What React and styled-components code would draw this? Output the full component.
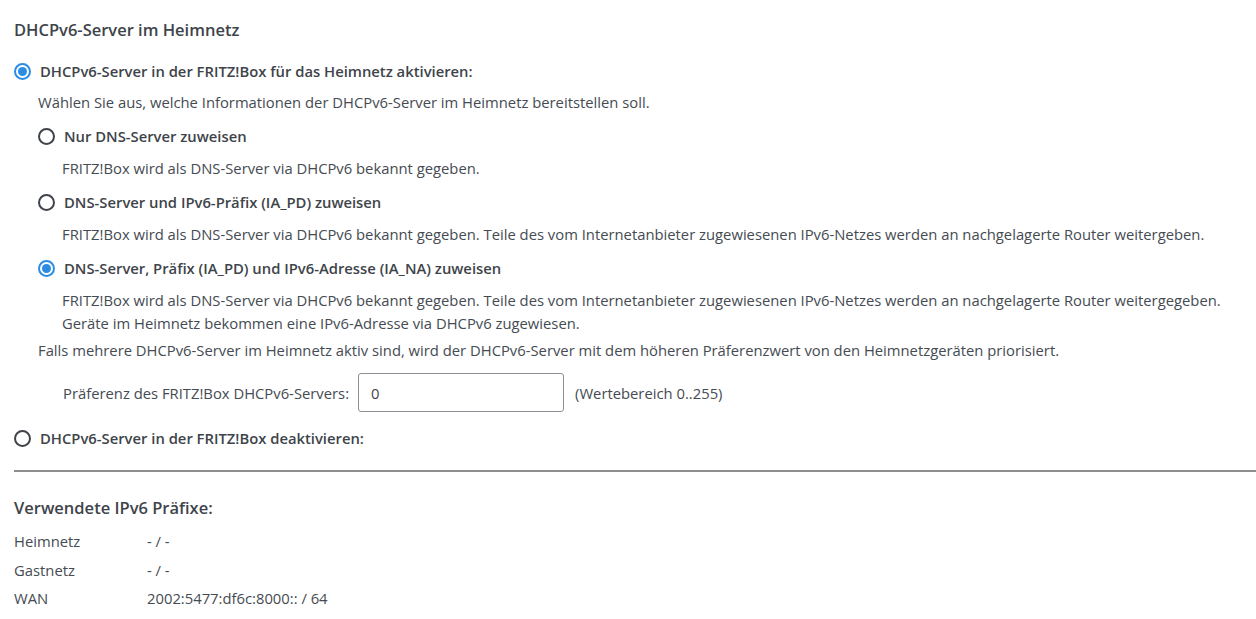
import React from "react";
import styled, { createGlobalStyle } from "styled-components";

const Global = createGlobalStyle`
  html, body { margin: 0; padding: 0; background: #fff; }
  body {
    font-family: "Open Sans", "Noto Sans", sans-serif;
    font-size: 14.8px;
    color: #454b52;
  }
`;

const Page = styled.div`
  padding: 19px 0 0 14px;
`;

const Heading = styled.h2`
  margin: ${(p) => p.$top || 0}px 0 0 0;
  font-size: 16.5px;
  font-weight: 600;
  color: #3e444a;
  line-height: 22px;
`;

const Group = styled.div`
  display: flex;
  flex-direction: column;
  padding-left: ${(p) => p.$indent || 0}px;
`;

const RadioRow = styled.label`
  display: flex;
  align-items: center;
  gap: 9px;
  height: 22px;
  margin-top: ${(p) => p.$top || 0}px;
  font-weight: 600;
  color: #3e444a;
  cursor: pointer;
`;

const RadioMark = styled.span`
  box-sizing: border-box;
  width: 17px;
  height: 17px;
  border-radius: 50%;
  border: 2px solid ${(p) => (p.$on ? "#2a8de3" : "#3e444a")};
  display: flex;
  align-items: center;
  justify-content: center;
  flex: none;
  &::after {
    content: "";
    width: 9px;
    height: 9px;
    border-radius: 50%;
    background: #2a8de3;
    display: ${(p) => (p.$on ? "block" : "none")};
  }
`;

const Text = styled.p`
  margin: ${(p) => p.$top || 0}px 0 0 ${(p) => p.$left || 0}px;
  line-height: 23px;
`;

const InputRow = styled.div`
  display: flex;
  align-items: center;
  margin: 11px 0 0 25px;
`;

const FieldLabel = styled.span`
  margin-right: 9px;
`;

const Hint = styled.span`
  margin-left: 11px;
`;

const NumberField = styled.input`
  box-sizing: border-box;
  width: 206px;
  height: 39px;
  border: 1px solid #8b9096;
  border-radius: 3px;
  padding: 0 12px;
  font: inherit;
  color: #3e444a;
  outline: none;
`;

const Rule = styled.hr`
  border: none;
  border-top: 2px solid #8d8d8d;
  margin: 21px 0 0 0;
`;

const InfoGrid = styled.div`
  display: grid;
  grid-template-columns: 133px auto;
  row-gap: 5.5px;
  margin-top: 11px;
  line-height: 23px;
`;

const options = [
  {
    label: "Nur DNS-Server zuweisen",
    lines: ["FRITZ!Box wird als DNS-Server via DHCPv6 bekannt gegeben."],
  },
  {
    label: "DNS-Server und IPv6-Präfix (IA_PD) zuweisen",
    lines: [
      "FRITZ!Box wird als DNS-Server via DHCPv6 bekannt gegeben. Teile des vom Internetanbieter zugewiesenen IPv6-Netzes werden an nachgelagerte Router weitergeben.",
    ],
  },
  {
    label: "DNS-Server, Präfix (IA_PD) und IPv6-Adresse (IA_NA) zuweisen",
    on: true,
    lines: [
      "FRITZ!Box wird als DNS-Server via DHCPv6 bekannt gegeben. Teile des vom Internetanbieter zugewiesenen IPv6-Netzes werden an nachgelagerte Router weitergegeben.",
      "Geräte im Heimnetz bekommen eine IPv6-Adresse via DHCPv6 zugewiesen.",
    ],
  },
];

const prefixes = [
  ["Heimnetz", "- / -"],
  ["Gastnetz", "- / -"],
  ["WAN", "2002:5477:df6c:8000:: / 64"],
];

export default function App() {
  return (
    <Page>
      <Global />
      <Heading>DHCPv6-Server im Heimnetz</Heading>
      <RadioRow $top={19}>
        <RadioMark $on />
        DHCPv6-Server in der FRITZ!Box für das Heimnetz aktivieren:
      </RadioRow>
      <Group $indent={24}>
        <Text $top={9}>
          Wählen Sie aus, welche Informationen der DHCPv6-Server im Heimnetz bereitstellen soll.
        </Text>
        {options.map((o) => (
          <React.Fragment key={o.label}>
            <RadioRow $top={11}>
              <RadioMark $on={o.on} />
              {o.label}
            </RadioRow>
            <Text $top={10} $left={24}>
              {o.lines.map((l, i) => (
                <React.Fragment key={i}>
                  {i > 0 && <br />}
                  {l}
                </React.Fragment>
              ))}
            </Text>
          </React.Fragment>
        ))}
        <Text $top={4}>
          Falls mehrere DHCPv6-Server im Heimnetz aktiv sind, wird der DHCPv6-Server mit dem höheren Präferenzwert von den Heimnetzgeräten priorisiert.
        </Text>
        <InputRow>
          <FieldLabel>Präferenz des FRITZ!Box DHCPv6-Servers:</FieldLabel>
          <NumberField defaultValue="0" />
          <Hint>(Wertebereich 0..255)</Hint>
        </InputRow>
      </Group>
      <RadioRow $top={15}>
        <RadioMark />
        DHCPv6-Server in der FRITZ!Box deaktivieren:
      </RadioRow>
      <Rule />
      <Heading $top={25}>Verwendete IPv6 Präfixe:</Heading>
      <InfoGrid>
        {prefixes.map(([k, v]) => (
          <React.Fragment key={k}>
            <span>{k}</span>
            <span>{v}</span>
          </React.Fragment>
        ))}
      </InfoGrid>
    </Page>
  );
}
